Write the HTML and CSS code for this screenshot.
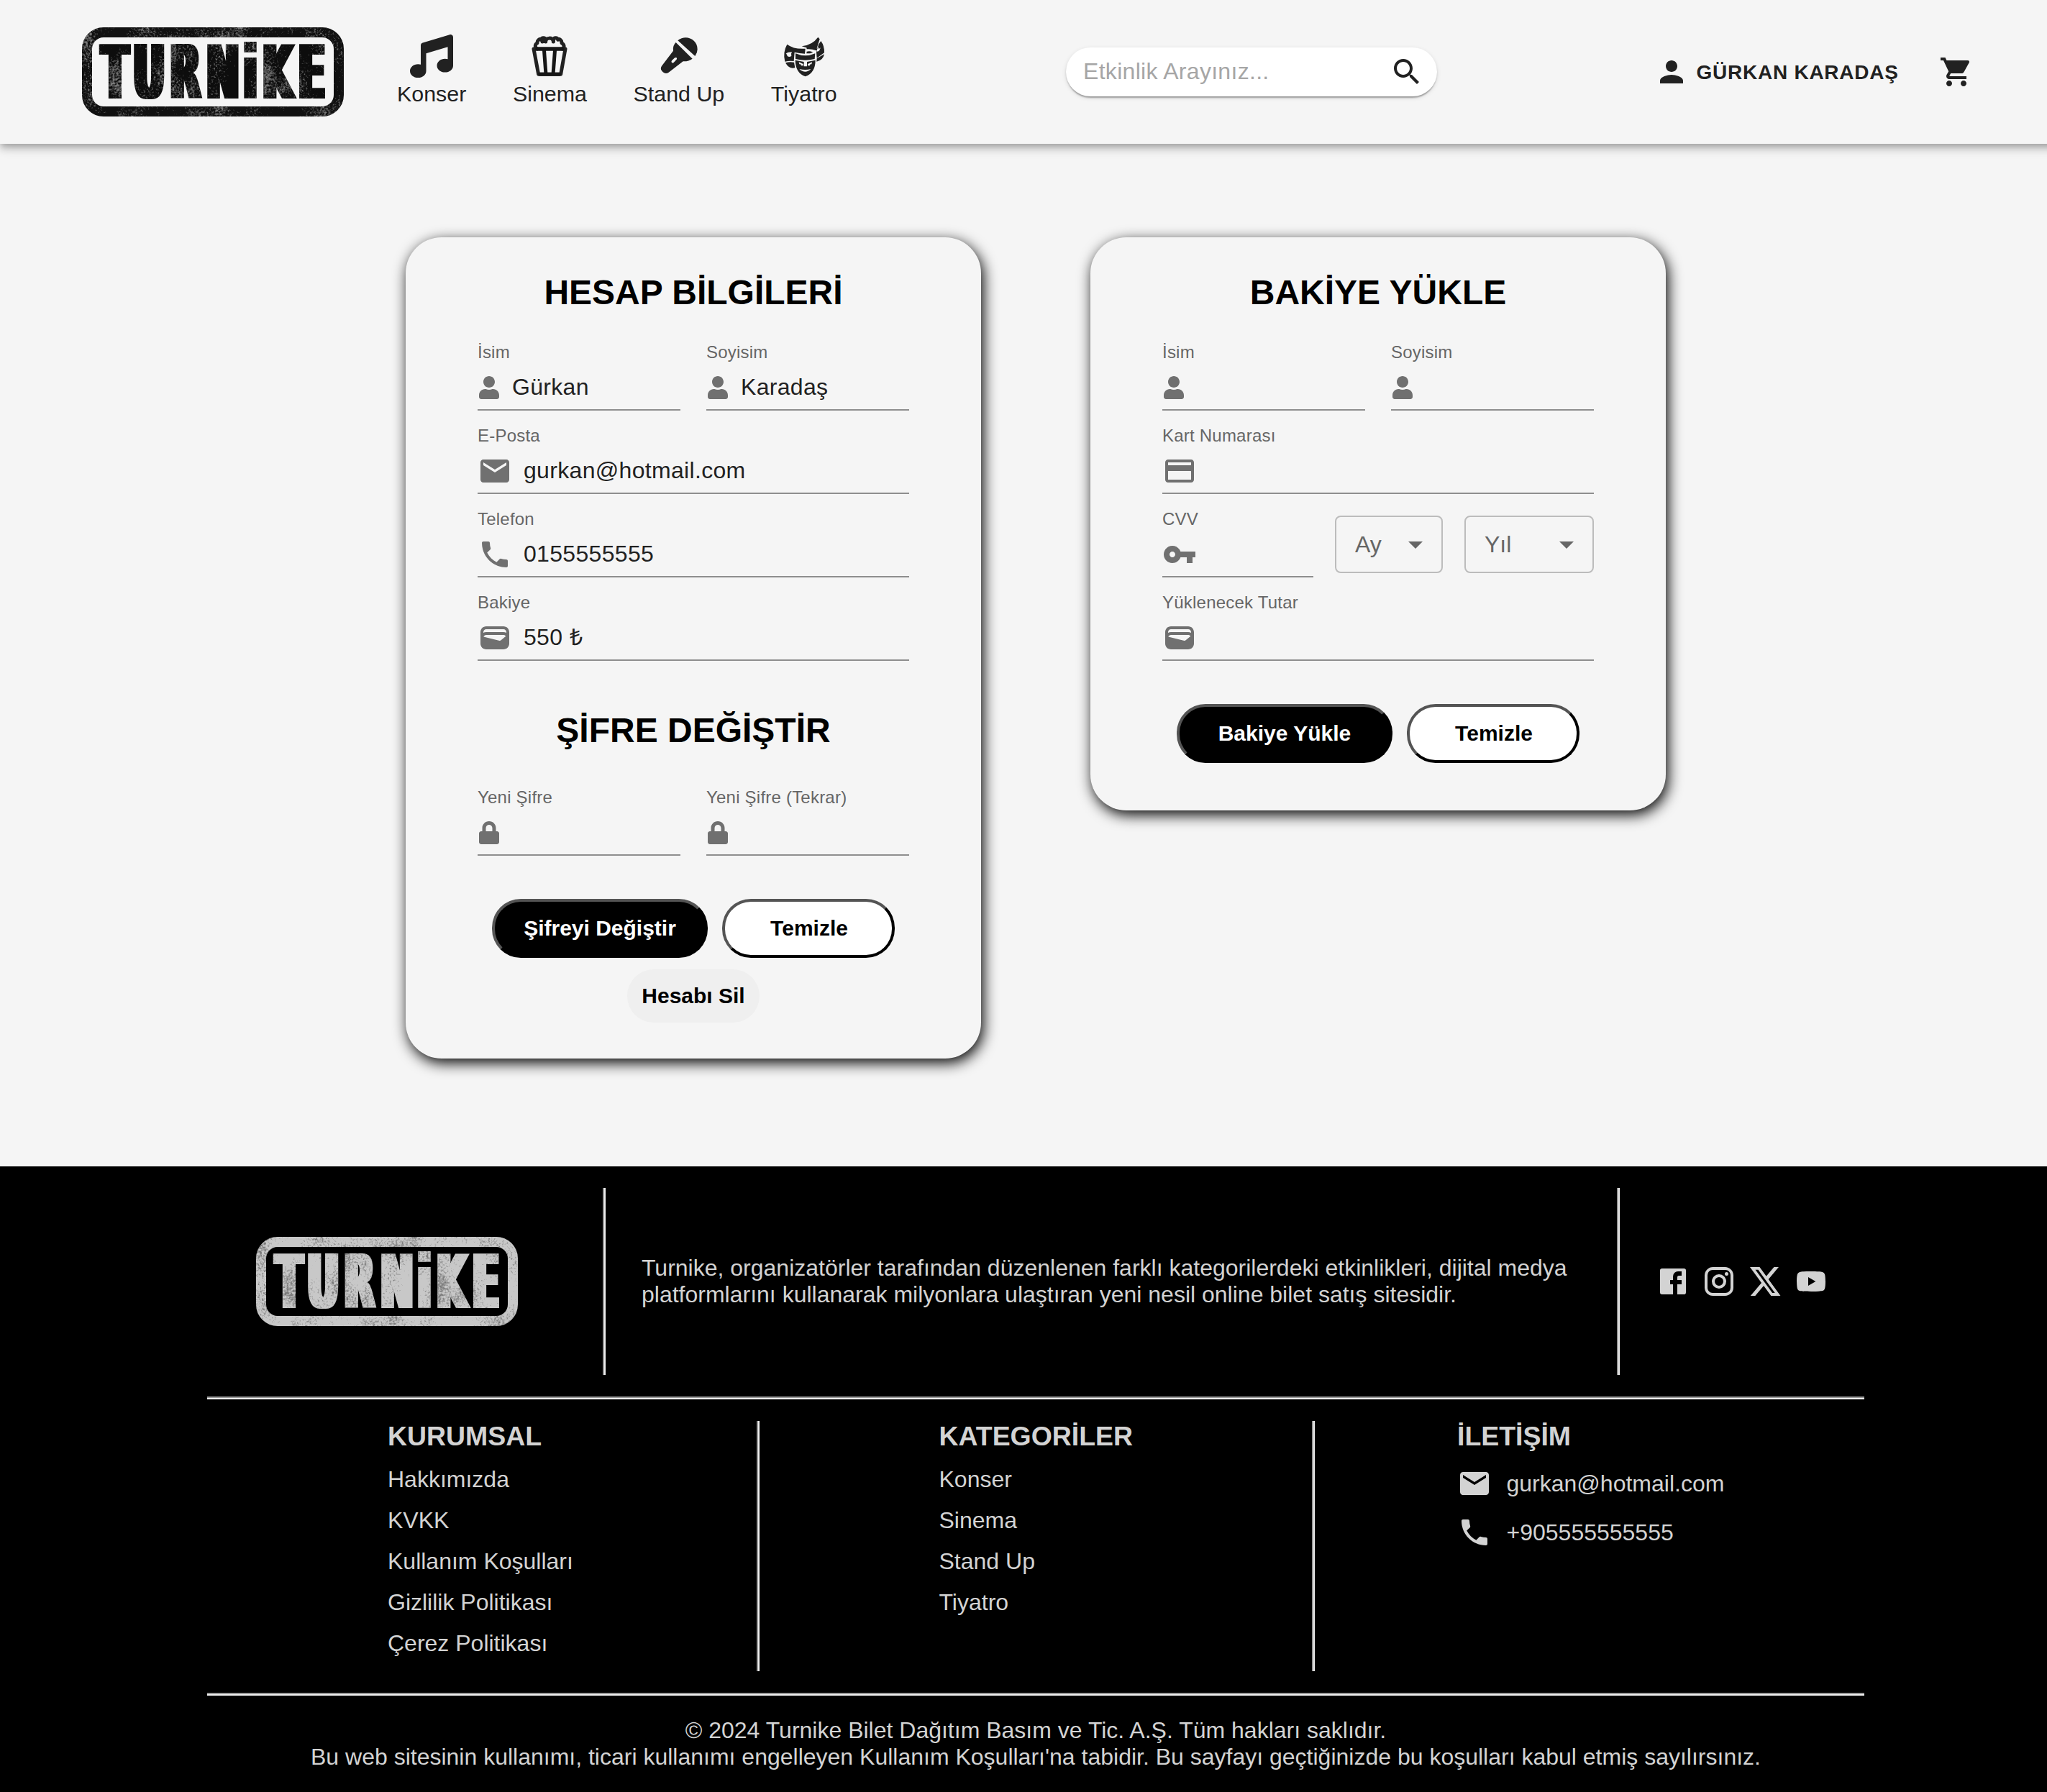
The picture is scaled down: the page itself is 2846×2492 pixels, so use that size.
FILE: index.html
```html
<!DOCTYPE html>
<html lang="tr">
<head>
<meta charset="utf-8">
<title>Turnike</title>
<link rel="stylesheet" href="styles.css">
</head>
<body>
<svg class="defs" width="0" height="0" aria-hidden="true">
  <defs>
    <filter id="widen" filterUnits="userSpaceOnUse" x="0" y="0" width="364" height="124">
      <feMorphology operator="dilate" radius="4 0"/>
    </filter>
    <filter id="grunge-dark" filterUnits="userSpaceOnUse" x="0" y="0" width="364" height="124" color-interpolation-filters="sRGB">
      <feTurbulence type="fractalNoise" baseFrequency="0.35" numOctaves="3" seed="4" result="fine"/>
      <feTurbulence type="fractalNoise" baseFrequency="0.03 0.02" numOctaves="3" seed="11" result="coarse"/>
      <feComposite in="fine" in2="coarse" operator="arithmetic" k1="0" k2="0.5" k3="0.5" k4="0" result="mix"/>
      <feColorMatrix in="mix" type="matrix" values="0 0 0 0 0.48  0 0 0 0 0.48  0 0 0 0 0.48  5 0 0 0 -2.6" result="specks"/>
      <feComposite in="specks" in2="SourceAlpha" operator="in" result="clipped"/>
      <feMerge><feMergeNode in="SourceGraphic"/><feMergeNode in="clipped"/></feMerge>
    </filter>
    <filter id="grunge-light" filterUnits="userSpaceOnUse" x="0" y="0" width="364" height="124" color-interpolation-filters="sRGB">
      <feTurbulence type="fractalNoise" baseFrequency="0.35" numOctaves="3" seed="4" result="fine"/>
      <feTurbulence type="fractalNoise" baseFrequency="0.03 0.02" numOctaves="3" seed="11" result="coarse"/>
      <feComposite in="fine" in2="coarse" operator="arithmetic" k1="0" k2="0.5" k3="0.5" k4="0" result="mix"/>
      <feColorMatrix in="mix" type="matrix" values="0 0 0 0 0.47  0 0 0 0 0.47  0 0 0 0 0.47  5 0 0 0 -2.62" result="specks"/>
      <feComposite in="specks" in2="SourceAlpha" operator="in" result="clipped"/>
      <feMerge><feMergeNode in="SourceGraphic"/><feMergeNode in="clipped"/></feMerge>
    </filter>
    <symbol id="i-user" viewBox="0 0 448 512"><path d="M224 256c70.7 0 128-57.3 128-128S294.7 0 224 0 96 57.3 96 128s57.3 128 128 128zm89.6 32h-16.7c-22.2 10.2-46.9 16-72.9 16s-50.6-5.8-72.9-16h-16.7C60.2 288 0 348.2 0 422.4V464c0 26.5 21.5 48 48 48h352c26.5 0 48-21.5 48-48v-41.6c0-74.2-60.2-134.4-134.4-134.4z"/></symbol>
    <symbol id="i-lock" viewBox="0 0 448 512"><path d="M400 224h-24v-72C376 68.2 307.8 0 224 0S72 68.2 72 152v72H48c-26.5 0-48 21.5-48 48v192c0 26.5 21.5 48 48 48h352c26.5 0 48-21.5 48-48V272c0-26.5-21.5-48-48-48zm-104 0H152v-72c0-39.7 32.3-72 72-72s72 32.3 72 72v72z"/></symbol>
    <symbol id="i-mail" viewBox="0 0 24 24"><path d="M20 4H4c-1.1 0-1.99.9-1.99 2L2 18c0 1.1.9 2 2 2h16c1.100 0 2-.9 2-2V6c0-1.100-.9-2-2-2zm0 4l-8 5-8-5V6l8 5 8-5v2z"/></symbol>
    <symbol id="i-phone" viewBox="0 0 24 24"><path d="M6.620 10.790c1.440 2.830 3.760 5.140 6.590 6.590l2.200-2.200c.27-.27.67-.36 1.020-.24 1.120.37 2.330.57 3.570.57.55 0 1 .45 1 1V20c0 .55-.45 1-1 1-9.390 0-17-7.610-17-17 0-.55.45-1 1-1h3.500c.55 0 1 .45 1 1 0 1.250.2 2.450.57 3.570.11.35.03.74-.25 1.020l-2.200 2.200z"/></symbol>
    <symbol id="i-wallet" viewBox="0 0 24 24"><path d="M18 4H6C3.790 4 2 5.790 2 8v8c0 2.210 1.790 4 4 4h12c2.210 0 4-1.790 4-4V8c0-2.210-1.790-4-4-4zm-1.860 9.770c-.24.2-.57.28-.88.2L4.150 11.250C4.450 10.520 5.160 10 6 10h12c.67 0 1.260.34 1.630.84l-3.490 2.930zM6 6h12c1.100 0 2 .9 2 2v.55c-.59-.34-1.270-.55-2-.55H6c-.73 0-1.410.21-2 .55V8c0-1.100.9-2 2-2z"/></symbol>
    <symbol id="i-card" viewBox="0 0 24 24"><path d="M20 4H4c-1.110 0-1.990.89-1.990 2L2 18c0 1.110.89 2 2 2h16c1.110 0 2-.89 2-2V6c0-1.110-.89-2-2-2zm0 14H4v-6h16v6zm0-10H4V6h16v2z"/></symbol>
    <symbol id="i-key" viewBox="0 0 24 24"><path d="M12.650 10C11.830 7.670 9.610 6 7 6c-3.310 0-6 2.690-6 6s2.690 6 6 6c2.610 0 4.830-1.670 5.650-4H17v4h4v-4h2v-4H12.650zM7 14c-1.100 0-2-.9-2-2s.9-2 2-2 2 .9 2 2-.9 2-2 2z"/></symbol>
    <symbol id="i-caret" viewBox="0 0 24 24"><path d="M7 10l5 5 5-5z"/></symbol>
  </defs>
</svg>

<div class="page">
  <header class="header">
    <svg class="logo logo--dark" width="364" height="124" viewBox="0 0 364 124">
      <g filter="url(#grunge-dark)">
        <rect class="logo__frame" x="7" y="7" width="350" height="110" rx="23"/>
        <g filter="url(#widen)">
          <text class="logo__text" transform="translate(0 98.500) scale(.52 1)" x="53 137 236 333 432 483 579" y="0">TURNiKE</text>
        </g>
      </g>
    </svg>
    <nav class="nav">
      <a class="nav__item">
        <svg width="60" height="60" viewBox="0 0 512 512"><path d="M499.100 6.300c8.100 6 12.900 15.600 12.900 25.700v72V368c0 44.200-43 80-96 80s-96-35.800-96-80s43-80 96-80c11.200 0 22 1.600 32 4.600V147L192 223.800V432c0 44.200-43 80-96 80s-96-35.800-96-80s43-80 96-80c11.200 0 22 1.600 32 4.600V200 128c0-14.100 9.300-26.600 22.800-30.700l320-96c9.700-2.900 20.200-1.100 28.300 5z"/></svg>
        <span>Konser</span>
      </a>
      <a class="nav__item">
        <svg class="stroke-icon" width="54" height="60" viewBox="21 24 162 180">
          <path d="M50 84C40 78 41 64 51 60C50 47 61 41 67 46C69 36 83 35 86 46V51C87 36 116 35 118 51V46C121 35 135 36 137 46C143 41 154 47 153 60C163 64 166 78 156 84"/>
          <path d="M72 44V54M86 44V54M118 44V54"/>
          <path d="M36 84H168L149 190H56Z"/>
          <path class="overlap" d="M79 84L87 190M125 84L117 190M50 84H156M62 190H142"/>
        </svg>
        <span>Sinema</span>
      </a>
      <a class="nav__item">
        <svg width="60" height="60" viewBox="555 24 180 180">
          <path d="M640 49C672 22 722 42 722 86Q722 100 712 114Z"/>
          <path d="M632 57L701 125Q685 137 662 136L602 182Q590 190 578 181L573 175Q566 166 573 155L621 92Q618 70 632 57ZM626 122L615 133Q611 139 616 142Q621 144 625 139L635 128Q638 122 635 121Q630 118 626 122Z" fill-rule="evenodd"/>
        </svg>
        <span>Stand Up</span>
      </a>
      <a class="nav__item">
        <svg width="60" height="60" viewBox="1074 24 180 180">
          <path fill-rule="evenodd" d="M1093 65Q1123 87 1169 83L1167 104Q1145 103 1124 98L1121 135Q1103 132 1084 137Q1074 98 1093 65ZM1088 104Q1096 97 1113 97L1110 104L1111 113Q1103 121 1094 114L1092 107Z"/>
          <path d="M1086 142Q1104 136 1122 140L1126 163Q1102 170 1086 142Z"/>
          <path d="M1154 73Q1198 68 1222 35L1229 43L1214 91Q1194 83 1175 85L1174 79Z"/>
          <path fill-rule="evenodd" d="M1234 51Q1249 71 1248 100L1217 122L1215 98L1224 66ZM1222 76L1226 84L1232 79Q1230 94 1220 95Q1212 91 1215 84Z"/>
          <path d="M1248 106Q1243 132 1216 137L1217 124Z"/>
          <path d="M1175 95Q1188 91 1201 98L1189 103H1174Z"/>
          <path d="M1128 103Q1169 121 1210 103L1208 126Q1169 136 1128 126Z"/>
          <path fill-rule="evenodd" d="M1127 131L1163 138V157H1176V138L1211 131Q1211 184 1169 199Q1128 185 1127 131ZM1142 139L1144 148H1149L1152 154H1160V147ZM1197 139L1179 147V154H1187L1190 148H1195ZM1144 168Q1169 174 1192 168Q1169 191 1144 168Z"/>
        </svg>
        <span>Tiyatro</span>
      </a>
    </nav>
    <div class="search">
      <span class="search__placeholder">Etkinlik Arayınız...</span>
      <svg width="48" height="48" viewBox="0 0 24 24"><path d="M15.500 14h-.79l-.28-.27C15.410 12.590 16 11.110 16 9.500 16 5.910 13.090 3 9.500 3S3 5.910 3 9.500 5.910 16 9.500 16c1.610 0 3.090-.59 4.230-1.570l.27.28v.79l5 4.990L20.490 19l-4.990-5zm-6 0C7.010 14 5 11.990 5 9.500S7.010 5 9.500 5 14 7.010 14 9.500 11.990 14 9.500 14z"/></svg>
    </div>
    <div class="account">
      <svg width="48" height="48" viewBox="0 0 24 24"><path d="M12 12c2.210 0 4-1.790 4-4s-1.790-4-4-4-4 1.790-4 4 1.790 4 4 4zm0 2c-2.670 0-8 1.340-8 4v2h16v-2c0-2.660-5.330-4-8-4z"/></svg>
      <span>GÜRKAN KARADAŞ</span>
    </div>
    <svg class="cart" width="48" height="48" viewBox="0 0 24 24"><path d="M7 18c-1.100 0-1.990.9-1.990 2S5.900 22 7 22s2-.9 2-2-.9-2-2-2zM1 2v2h2l3.600 7.590-1.350 2.450c-.16.28-.25.61-.25.96 0 1.100.9 2 2 2h12v-2H7.420c-.14 0-.25-.11-.25-.25l.03-.12.9-1.630h7.450c.75 0 1.410-.41 1.750-1.030l3.580-6.490c.08-.14.12-.31.12-.48 0-.55-.45-1-1-1H5.210l-.94-2H1zm16 16c-1.100 0-1.990.9-1.990 2s.89 2 1.990 2 2-.9 2-2-.9-2-2-2z"/></svg>
  </header>

  <main class="main">
    <section class="card card--account">
      <h2 class="card__title">HESAP BİLGİLERİ</h2>
      <div class="fields">
        <div class="row">
          <div class="field"><label>İsim</label><div class="field__line"><svg class="icon-sm"><use href="#i-user"/></svg><span>Gürkan</span></div></div>
          <div class="field"><label>Soyisim</label><div class="field__line"><svg class="icon-sm"><use href="#i-user"/></svg><span>Karadaş</span></div></div>
        </div>
        <div class="field"><label>E-Posta</label><div class="field__line"><svg class="icon-md"><use href="#i-mail"/></svg><span>gurkan@hotmail.com</span></div></div>
        <div class="field"><label>Telefon</label><div class="field__line"><svg class="icon-md"><use href="#i-phone"/></svg><span>0155555555</span></div></div>
        <div class="field"><label>Bakiye</label><div class="field__line"><svg class="icon-md"><use href="#i-wallet"/></svg><span>550 ₺</span></div></div>
      </div>
      <h2 class="card__title card__title--second">ŞİFRE DEĞİŞTİR</h2>
      <div class="fields">
        <div class="row">
          <div class="field"><label>Yeni Şifre</label><div class="field__line"><svg class="icon-sm"><use href="#i-lock"/></svg></div></div>
          <div class="field"><label>Yeni Şifre (Tekrar)</label><div class="field__line"><svg class="icon-sm"><use href="#i-lock"/></svg></div></div>
        </div>
      </div>
      <div class="actions">
        <button class="btn btn--black">Şifreyi Değiştir</button>
        <button class="btn btn--white">Temizle</button>
      </div>
      <button class="btn-delete">Hesabı Sil</button>
    </section>

    <section class="card card--balance">
      <h2 class="card__title">BAKİYE YÜKLE</h2>
      <div class="fields">
        <div class="row">
          <div class="field"><label>İsim</label><div class="field__line"><svg class="icon-sm"><use href="#i-user"/></svg></div></div>
          <div class="field"><label>Soyisim</label><div class="field__line"><svg class="icon-sm"><use href="#i-user"/></svg></div></div>
        </div>
        <div class="field"><label>Kart Numarası</label><div class="field__line"><svg class="icon-md"><use href="#i-card"/></svg></div></div>
        <div class="row row--cvv">
          <div class="field field--cvv"><label>CVV</label><div class="field__line"><svg class="icon-md"><use href="#i-key"/></svg></div></div>
          <div class="select select--month"><span>Ay</span><svg class="icon-md"><use href="#i-caret"/></svg></div>
          <div class="select select--year"><span>Yıl</span><svg class="icon-md"><use href="#i-caret"/></svg></div>
        </div>
        <div class="field"><label>Yüklenecek Tutar</label><div class="field__line"><svg class="icon-md"><use href="#i-wallet"/></svg></div></div>
      </div>
      <div class="actions">
        <button class="btn btn--black">Bakiye Yükle</button>
        <button class="btn btn--white">Temizle</button>
      </div>
    </section>
  </main>

  <footer class="footer">
    <div class="footer__top">
      <div class="footer__logo">
        <svg class="logo logo--light" width="364" height="124" viewBox="0 0 364 124">
          <g filter="url(#grunge-light)">
            <rect class="logo__frame" x="7" y="7" width="350" height="110" rx="23"/>
            <g filter="url(#widen)">
              <text class="logo__text" transform="translate(0 98.500) scale(.52 1)" x="53 137 236 333 432 483 579" y="0">TURNiKE</text>
            </g>
          </g>
        </svg>
      </div>
      <i class="vline"></i>
      <p class="footer__about">Turnike, organizatörler tarafından düzenlenen farklı kategorilerdeki etkinlikleri, dijital medya<br>platformlarını kullanarak milyonlara ulaştıran yeni nesil online bilet satış sitesidir.</p>
      <i class="vline"></i>
      <div class="social">
        <svg width="48" height="48" viewBox="0 0 24 24"><path d="M4.400 3h15.200A1.400 1.400 0 0 1 21 4.400v15.200a1.400 1.400 0 0 1-1.400 1.400H15v-7h3v-3h-3V9a1 1 0 0 1 1-1h2V5h-2.500A3.500 3.500 0 0 0 12 8.500V11h-2v3h2v7H4.400A1.400 1.400 0 0 1 3 19.600V4.400A1.400 1.400 0 0 1 4.400 3z"/></svg>
        <svg width="48" height="48" viewBox="0 0 24 24"><path d="M7.800 2h8.400C19.400 2 22 4.600 22 7.800v8.400a5.800 5.800 0 0 1-5.800 5.800H7.800C4.600 22 2 19.400 2 16.200V7.800A5.800 5.800 0 0 1 7.800 2m-.2 2A3.600 3.600 0 0 0 4 7.600v8.800C4 18.390 5.610 20 7.600 20h8.800a3.600 3.600 0 0 0 3.600-3.600V7.600C20 5.610 18.390 4 16.400 4H7.600m9.650 1.500a1.250 1.250 0 0 1 0 2.500 1.250 1.250 0 0 1 0-2.500M12 7a5 5 0 0 1 0 10 5 5 0 0 1 0-10m0 2a3 3 0 0 0 0 6 3 3 0 0 0 0-6z"/></svg>
        <svg width="48" height="48" viewBox="0 0 24 24"><path transform="translate(.25 -.3) scale(.985 1.025)" d="M18.244 2.250h3.308l-7.227 8.260 8.502 11.240H16.170l-5.214-6.817L4.990 21.750H1.680l7.730-8.835L1.254 2.250H8.080l4.713 6.231zm-1.161 17.520h1.833L7.084 4.126H5.117z"/></svg>
        <svg width="48" height="48" viewBox="0 0 24 24"><path d="M10 15l5.190-3L10 9v6m11.560-7.830c.13.47.22 1.100.28 1.900.07.8.1 1.490.1 2.090L22 12c0 2.190-.16 3.800-.44 4.830-.25.9-.83 1.480-1.730 1.730-.47.13-1.330.22-2.650.28-1.300.07-2.490.1-3.590.1L12 19c-4.190 0-6.800-.16-7.830-.44-.9-.25-1.480-.83-1.730-1.730-.13-.47-.22-1.100-.28-1.900-.07-.8-.1-1.490-.1-2.090L2 12c0-2.190.16-3.800.44-4.830.25-.9.83-1.480 1.730-1.730.47-.13 1.330-.22 2.650-.28 1.300-.07 2.490-.1 3.590-.1L12 5c4.190 0 6.800.16 7.830.44.9.25 1.480.83 1.730 1.730z"/></svg>
      </div>
    </div>
    <i class="hline"></i>
    <div class="footer__columns">
      <div class="column column--corporate">
        <h3>KURUMSAL</h3>
        <a>Hakkımızda</a>
        <a>KVKK</a>
        <a>Kullanım Koşulları</a>
        <a>Gizlilik Politikası</a>
        <a>Çerez Politikası</a>
      </div>
      <i class="vline"></i>
      <div class="column column--categories">
        <h3>KATEGORİLER</h3>
        <a>Konser</a>
        <a>Sinema</a>
        <a>Stand Up</a>
        <a>Tiyatro</a>
      </div>
      <i class="vline"></i>
      <div class="column column--contact">
        <h3>İLETİŞİM</h3>
        <div class="contact"><svg class="icon-md"><use href="#i-mail"/></svg><span>gurkan@hotmail.com</span></div>
        <div class="contact"><svg class="icon-md"><use href="#i-phone"/></svg><span>+905555555555</span></div>
      </div>
    </div>
    <i class="hline"></i>
    <p class="footer__legal">© 2024 Turnike Bilet Dağıtım Basım ve Tic. A.Ş. Tüm hakları saklıdır.<br>Bu web sitesinin kullanımı, ticari kullanımı engelleyen Kullanım Koşulları'na tabidir. Bu sayfayı geçtiğinizde bu koşulları kabul etmiş sayılırsınız.</p>
  </footer>
</div>
</body>
</html>
```

FILE: styles.css
```css
* {
  box-sizing: border-box;
}

html {
  overflow: hidden;
}

body {
  margin: 0;
  background: #f5f5f5;
  font-family: "Liberation Sans", Arial, sans-serif;
  font-size: 32px;
  line-height: 37px;
  color: #000;
}

h2, h3, p {
  margin: 0;
}

svg {
  display: block;
  flex: none;
  fill: currentColor;
}

.defs {
  position: absolute;
}

.page {
  width: 2880px;
}

.icon-sm {
  width: 32px;
  height: 32px;
}

.icon-md {
  width: 48px;
  height: 48px;
}

/* Logo */
.logo__frame {
  fill: none;
  stroke: currentColor;
  stroke-width: 14px;
}

.logo__text {
  font-family: "DejaVu Sans", sans-serif;
  font-weight: 700;
  font-size: 104px;
}

.logo--dark {
  color: #111;
}

.logo--light {
  color: #c8c8c8;
}

/* Header */
.header {
  display: flex;
  align-items: center;
  height: 200px;
  padding-left: 114px;
  color: #212121;
  background: #f5f5f5;
  box-shadow: 0 4px 8px -2px rgba(0, 0, 0, .2), 0 8px 10px 0 rgba(0, 0, 0, .14), 0 2px 20px 0 rgba(0, 0, 0, .12);
}

.nav {
  display: flex;
  gap: 64.6px;
  width: 612px;
  margin: -4px 0 0 74px;
}

.nav__item {
  display: flex;
  flex: none;
  flex-direction: column;
  align-items: center;
  gap: 5px;
  font-size: 30.4px;
  line-height: 35px;
  white-space: nowrap;
}

.stroke-icon {
  fill: none;
  stroke: currentColor;
  stroke-width: 15;
  stroke-linecap: round;
  stroke-linejoin: round;
}

.stroke-icon .overlap {
  stroke: #161616;
}

.search {
  display: flex;
  align-items: center;
  justify-content: space-between;
  width: 516px;
  height: 68px;
  margin-left: 318px;
  padding: 0 18px 0 24px;
  border-radius: 34px;
  background: #fff;
  box-shadow: 0 4px 2px -2px rgba(0, 0, 0, .2), 0 2px 2px 0 rgba(0, 0, 0, .14), 0 2px 6px 0 rgba(0, 0, 0, .12);
}

.search__placeholder {
  padding-bottom: 2px;
  color: #a6a6a6;
  letter-spacing: .3px;
}

.account {
  display: flex;
  align-items: center;
  gap: 10.5px;
  width: 340px;
  margin-left: 302px;
  font-size: 28px;
  font-weight: 700;
  letter-spacing: .75px;
  white-space: nowrap;
}

.cart {
  margin-left: 56px;
}

/* Cards */
.main {
  display: flex;
  align-items: flex-start;
  gap: 152px;
  height: 1422px;
  padding: 130px 564px 0;
}

.card {
  display: flex;
  flex-direction: column;
  align-items: center;
  width: 800px;
  padding: 49px 100px 0;
  border-radius: 50px;
  background: #f5f5f5;
  box-shadow: 3px 6px 20px #000;
}

.card--account {
  height: 1142px;
}

.card--balance {
  height: 797px;
}

.card__title {
  margin-bottom: 41px;
  font-size: 48px;
  line-height: 55px;
  font-weight: 700;
}

.card__title--second {
  margin: 69px 0 51px;
}

.fields {
  display: flex;
  flex-direction: column;
  gap: 20px;
  width: 100%;
}

.row {
  display: grid;
  grid-template-columns: 1fr 1fr;
  gap: 36px;
}

.row--cvv {
  display: flex;
  align-items: center;
  gap: 30px;
}

.field label {
  display: block;
  padding: 1px 0 5px;
  font-size: 24px;
  line-height: 28px;
  letter-spacing: .22px;
  color: #666;
}

.field__line {
  display: flex;
  align-items: center;
  gap: 16px;
  height: 62px;
  border-bottom: 2px solid #8e8e8e;
  color: #707070;
}

.field__line span {
  padding-bottom: 2px;
  color: #212121;
  letter-spacing: .32px;
}

.field--cvv {
  width: 210px;
}

.select {
  display: flex;
  align-items: center;
  justify-content: space-between;
  height: 80px;
  margin-top: 4px;
  padding: 0 12px 0 26px;
  border: 2px solid #bcbcbc;
  border-radius: 8px;
  color: #666;
}

.select--month {
  width: 150px;
}

.select--year {
  width: 180px;
}

.actions {
  display: flex;
  gap: 20px;
  margin-top: 60px;
}

.btn {
  height: 82px;
  padding: 0;
  border: 4px outset #000;
  border-radius: 40px;
  font: 700 30px "Liberation Sans", Arial, sans-serif;
}

.btn--black {
  width: 300px;
  background: #000;
  color: #fff;
}

.btn--white {
  width: 240px;
  padding-left: 2px;
  background: #fff;
  color: #000;
}

.btn-delete {
  width: 184px;
  height: 74px;
  margin-top: 16px;
  padding: 0;
  border: 0;
  border-radius: 37px;
  background: #efefef;
  color: #000;
  font: 700 30px "Liberation Sans", Arial, sans-serif;
  white-space: nowrap;
}

/* Footer */
.footer {
  display: flex;
  flex-direction: column;
  gap: 30px;
  height: 870px;
  padding: 30px 288px;
  background: #000;
  color: #d3d3d3;
}

.vline {
  width: 4px;
  border-left: 2px solid #9a9a9a;
  border-right: 2px solid #eee;
}

.hline {
  height: 4px;
  border-top: 2px solid #9a9a9a;
  border-bottom: 2px solid #eee;
}

.footer__top {
  display: grid;
  grid-template-columns: 550px 4px 1406px 4px 1fr;
  height: 260px;
}

.footer__logo {
  display: flex;
  align-items: center;
  padding-left: 68px;
}

.footer__about {
  align-self: center;
  padding-left: 50px;
  white-space: nowrap;
}

.social {
  display: flex;
  align-items: center;
  gap: 16px;
  padding-left: 50px;
}

.footer__columns {
  display: grid;
  grid-template-columns: 764px 4px 768px 4px 1fr;
  height: 348px;
}

.column {
  display: flex;
  flex-direction: column;
  gap: 20px;
}

.column--corporate {
  padding-left: 251px;
}

.column--categories {
  padding-left: 249.5px;
}

.column--contact {
  padding-left: 198px;
}

.column h3 {
  font-size: 37.44px;
  line-height: 43px;
  font-weight: 700;
}

.contact {
  display: flex;
  align-items: center;
  gap: 20.5px;
  height: 48px;
}

.footer__legal {
  text-align: center;
  white-space: nowrap;
}
```
